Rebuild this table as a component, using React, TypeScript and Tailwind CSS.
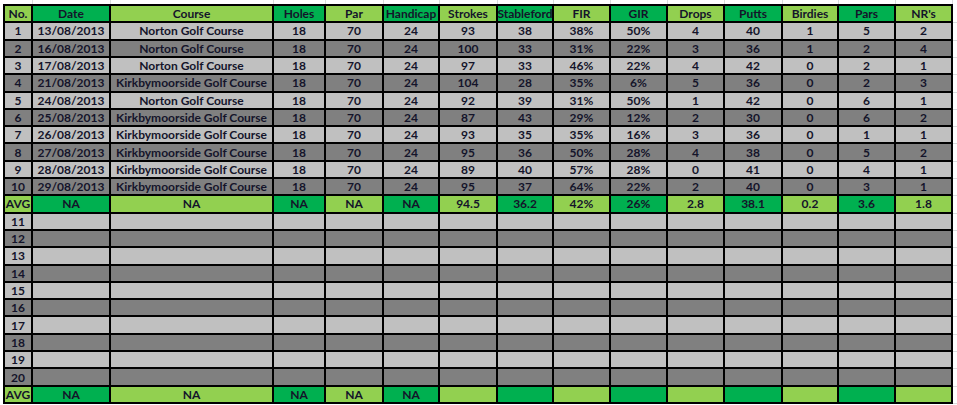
import React from "react";

const cols = [26, 76, 161, 50, 56, 54, 56, 54, 55, 55, 55, 56, 54, 55, 55];
const gridCols = "grid-cols-[26px_76px_161px_50px_56px_54px_56px_54px_55px_55px_55px_56px_54px_55px_55px]";

const headers = ["No.", "Date", "Course", "Holes", "Par", "Handicap", "Strokes", "Stableford", "FIR", "GIR", "Drops", "Putts", "Birdies", "Pars", "NR's"];

const N = "Norton Golf Course";
const K = "Kirkbymoorside Golf Course";
const data: string[][] = [
  ["1", "13/08/2013", N, "18", "70", "24", "93", "38", "38%", "50%", "4", "40", "1", "5", "2"],
  ["2", "16/08/2013", N, "18", "70", "24", "100", "33", "31%", "22%", "3", "36", "1", "2", "4"],
  ["3", "17/08/2013", N, "18", "70", "24", "97", "33", "46%", "22%", "4", "42", "0", "2", "1"],
  ["4", "21/08/2013", K, "18", "70", "24", "104", "28", "35%", "6%", "5", "36", "0", "2", "3"],
  ["5", "24/08/2013", N, "18", "70", "24", "92", "39", "31%", "50%", "1", "42", "0", "6", "1"],
  ["6", "25/08/2013", K, "18", "70", "24", "87", "43", "29%", "12%", "2", "30", "0", "6", "2"],
  ["7", "26/08/2013", K, "18", "70", "24", "93", "35", "35%", "16%", "3", "36", "0", "1", "1"],
  ["8", "27/08/2013", K, "18", "70", "24", "95", "36", "50%", "28%", "4", "38", "0", "5", "2"],
  ["9", "28/08/2013", K, "18", "70", "24", "89", "40", "57%", "28%", "0", "41", "0", "4", "1"],
  ["10", "29/08/2013", K, "18", "70", "24", "95", "37", "64%", "22%", "2", "40", "0", "3", "1"],
];
const avg1 = ["AVG", "NA", "NA", "NA", "NA", "NA", "94.5", "36.2", "42%", "26%", "2.8", "38.1", "0.2", "3.6", "1.8"];
const avg2 = ["AVG", "NA", "NA", "NA", "NA", "NA", "", "", "", "", "", "", "", "", ""];

function greenRow(cells: string[], key: string) {
  return cells.map((c, i) => (
    <div
      key={key + i}
      className={`flex items-center justify-center leading-none whitespace-nowrap pt-[1px] ${i % 2 === 0 ? "bg-[#92d050]" : "bg-[#00b050]"}`}
    >
      {c}
    </div>
  ));
}

function grayRow(cells: string[], idx: number, key: string) {
  const bg = idx % 2 === 0 ? "bg-[#c0c0c0]" : "bg-[#808080]";
  return cells.map((c, i) => (
    <div key={key + i} className={`flex items-center justify-center leading-none whitespace-nowrap pt-[1px] ${bg}`}>
      {c}
    </div>
  ));
}

export default function App() {
  const empty: string[][] = Array.from({ length: 10 }, (_, r) => [String(r + 11), ...Array(14).fill("")]);
  return (
    <div className="w-[957px] h-[405px] bg-white overflow-hidden font-['Lato',sans-serif] font-bold text-[12px] text-[#14142a]">
      <div className={`grid ${gridCols} gap-x-[2px] px-[4px] ml-[3px] h-[4px]`}>
        {cols.map((_, i) => (
          <div key={i} className="border-r border-[#dadcdd]" />
        ))}
      </div>
      <div className="flex">
        <div className="w-[3px]" />
        <div
          className={`grid ${gridCols} grid-rows-[repeat(23,minmax(0,1fr))] gap-[2px] p-[2px] bg-black h-[400px] w-[950px]`}
        >
          {greenRow(headers, "h")}
          {data.map((r, i) => grayRow(r, i, "d" + i))}
          {greenRow(avg1, "a1")}
          {empty.map((r, i) => grayRow(r, i, "e" + i))}
          {greenRow(avg2, "a2")}
        </div>
        <div className="flex-1 grid grid-rows-[repeat(23,minmax(0,1fr))] h-[400px] pt-[2px]">
          {Array.from({ length: 23 }, (_, i) => (
            <div key={i} className="border-b border-[#dadcdd]" />
          ))}
        </div>
      </div>
    </div>
  );
}
